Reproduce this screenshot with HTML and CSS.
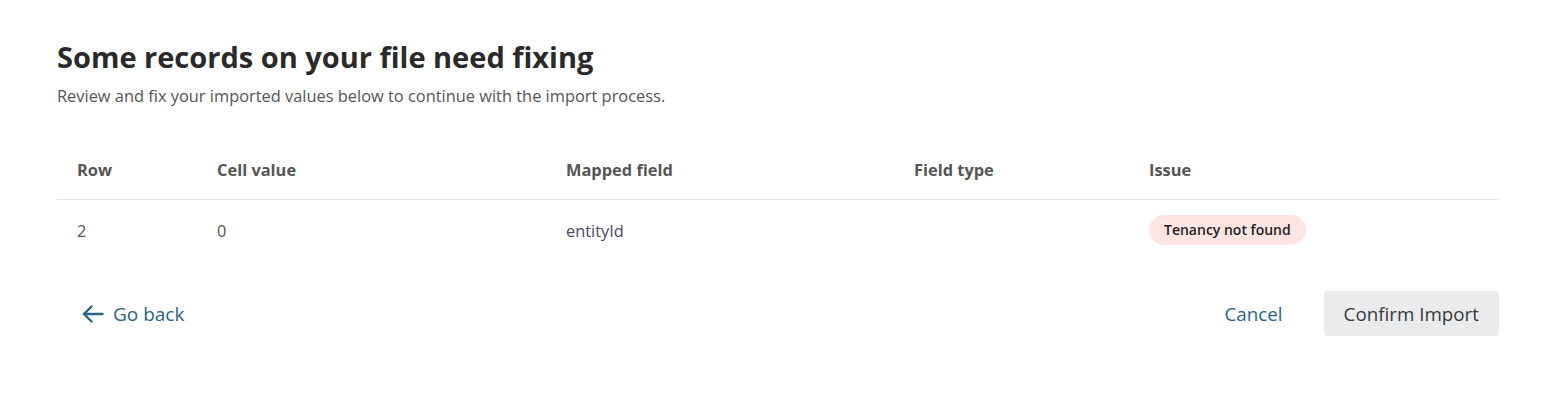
FILE: index.html
```html
<!DOCTYPE html>
<html lang="en">
<head>
<meta charset="utf-8">
<title>Some records on your file need fixing</title>
<link rel="stylesheet" href="styles.css">
</head>
<body>
<main class="page">
  <header class="intro">
    <h1 class="title">Some records on your file need fixing</h1>
    <p class="subtitle">Review and fix your imported values below to continue with the import process.</p>
  </header>
  <table class="issues">
    <colgroup>
      <col class="c-row"><col class="c-value"><col class="c-field"><col class="c-type"><col class="c-issue">
    </colgroup>
    <thead>
      <tr><th>Row</th><th>Cell value</th><th>Mapped field</th><th>Field type</th><th>Issue</th></tr>
    </thead>
    <tbody>
      <tr>
        <td>2</td>
        <td>0</td>
        <td class="mapped">entityId</td>
        <td></td>
        <td><span class="badge">Tenancy not found</span></td>
      </tr>
    </tbody>
  </table>
  <footer class="actions">
    <a class="back" href="#">
      <svg class="arrow" width="22" height="18" viewBox="0 0 22 18" fill="none" stroke="currentColor" stroke-width="2.4" stroke-linecap="round" stroke-linejoin="round"><path d="M20.5 9H2"/><path d="M9.5 1.5L2 9l7.5 7.5"/></svg>
      <span>Go back</span>
    </a>
    <div class="right">
      <button class="cancel" type="button">Cancel</button>
      <button class="confirm" type="button">Confirm Import</button>
    </div>
  </footer>
</main>
</body>
</html>
```
FILE: styles.css
```css
* { box-sizing: border-box; }
html, body { margin: 0; background: #fff; }
body {
  font-family: "Open Sans", "Noto Sans", "Liberation Sans", sans-serif;
  color: #555;
}
.page {
  padding: 37px 58px 0 57px;
}
.intro { margin-bottom: 34px; }
.title {
  margin: 0;
  font-size: 29px;
  font-weight: 700;
  color: #2a2a2a;
  line-height: 40px;
}
.subtitle {
  margin: 8px 0 0;
  font-size: 16.4px;
  line-height: 22px;
  color: #555;
}
.issues {
  width: 100%;
  border-collapse: collapse;
  table-layout: fixed;
}
.c-row { width: 140px; }
.c-value { width: 349px; }
.c-field { width: 348px; }
.c-type { width: 235px; }
.issues th {
  text-align: left;
  font-size: 16.4px;
  font-weight: 700;
  color: #555;
  padding: 0 20px;
  height: 58px;
  border-bottom: 1px solid #e2e2e2;
}
.issues td {
  font-size: 16.4px;
  color: #555;
  padding: 0 20px;
  height: 62px;
}
.issues td.mapped { color: #4d4b66; }
.badge {
  display: inline-block;
  background: #fde6e2;
  color: #1e1e1e;
  font-size: 14px;
  font-weight: 600;
  line-height: 30px;
  padding: 0 15px;
  border-radius: 15px;
}
.actions {
  display: flex;
  justify-content: space-between;
  align-items: center;
  margin-top: 30px;
}
.back {
  display: flex;
  align-items: center;
  gap: 9px;
  padding-left: 25px;
  color: #2a6587;
  text-decoration: none;
  font-size: 19px;
}
.arrow { display: block; }
.right {
  display: flex;
  align-items: center;
  gap: 41px;
}
.cancel {
  border: 0;
  background: none;
  font: inherit;
  font-size: 18.8px;
  color: #2a6587;
  padding: 0;
  cursor: pointer;
}
.confirm {
  border: 0;
  font: inherit;
  font-size: 18.8px;
  color: #3a3a3a;
  background: #eaebed;
  border-radius: 4px;
  height: 45px;
  padding: 0 20px;
  cursor: pointer;
}
```
